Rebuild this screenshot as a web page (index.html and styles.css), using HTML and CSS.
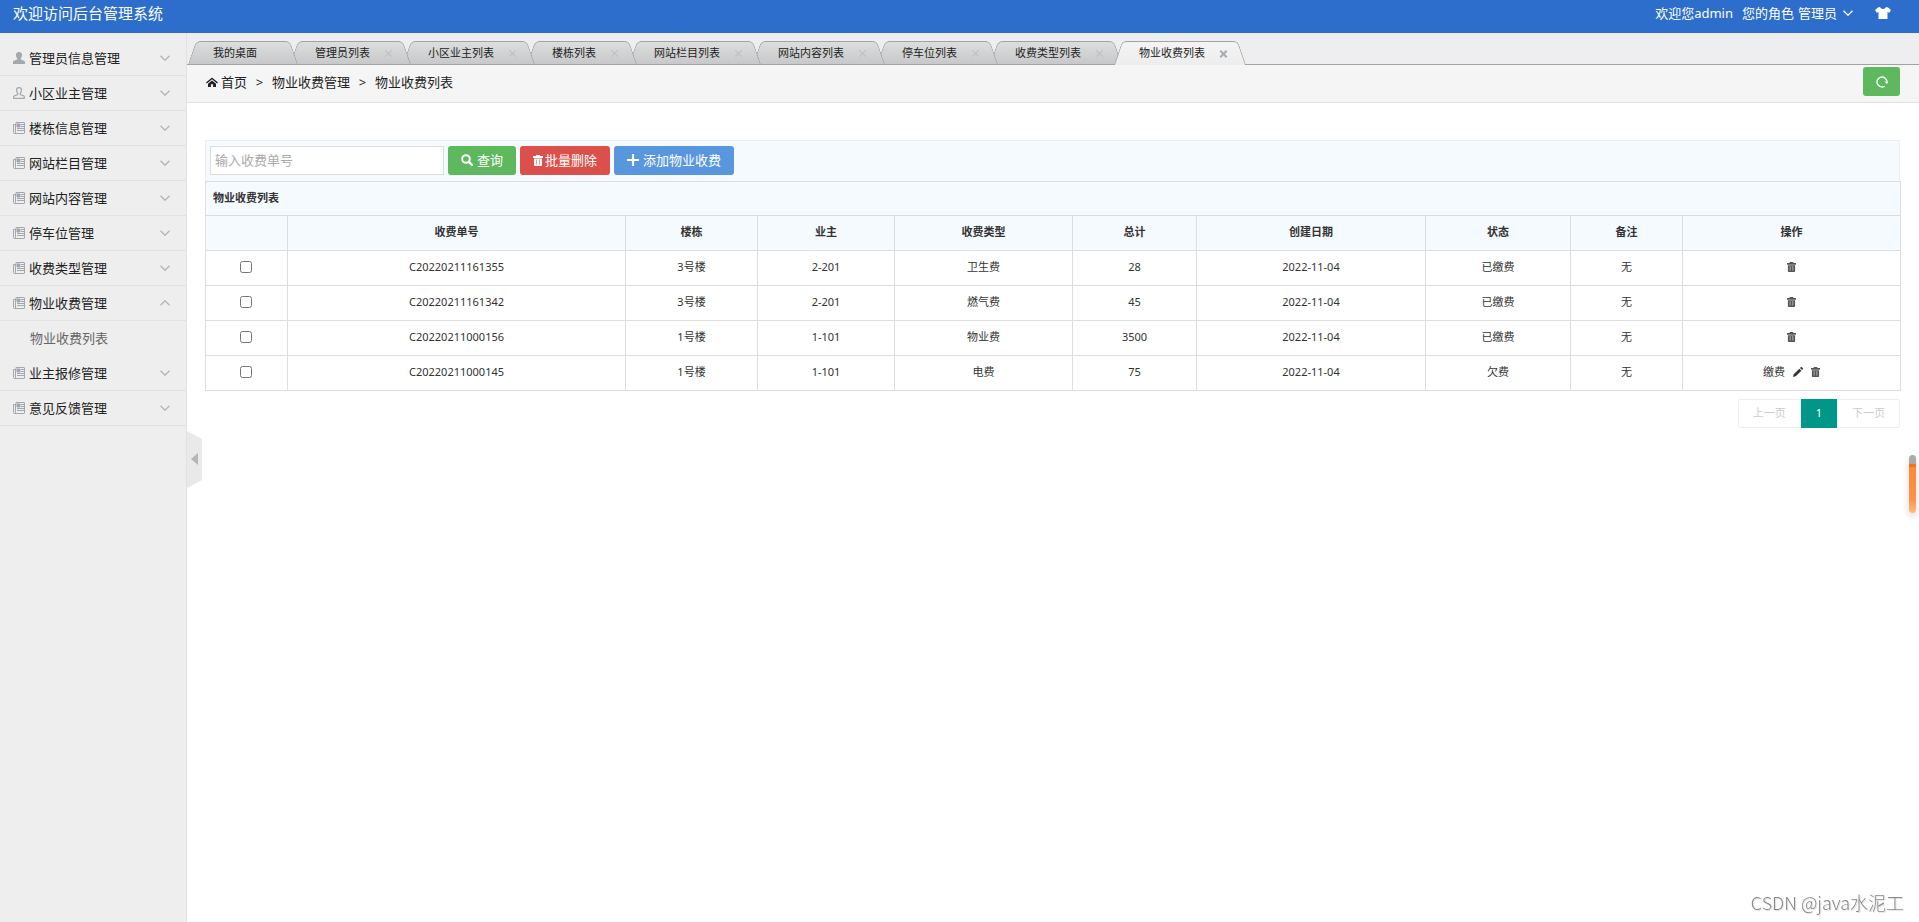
FILE: index.html
```html
<!DOCTYPE html>
<html lang="zh-CN">
<head>
<meta charset="utf-8">
<title>后台管理系统</title>
<link rel="stylesheet" href="styles.css">
</head>
<body>
<svg class="sprite" aria-hidden="true">
  <symbol id="i-user" viewBox="0 0 12 12"><path d="M6 0a3 3 0 0 1 3 3c0 1.400-.5 2.600-1.200 3.300v1.200L11 8.700c.7.300 1 .8 1 1.500V12H0v-1.800c0-.7.300-1.200 1-1.500l3.200-1.200V6.300C3.500 5.600 3 4.400 3 3a3 3 0 0 1 3-3z" fill="currentColor"/></symbol>
  <symbol id="i-user-line" viewBox="0 0 12 12"><path d="M6 .7c1.500 0 2.500 1 2.500 2.400 0 1.200-.5 2.300-1.200 2.900v1.500l3.200 1.200c.5.200.8.600.8 1.200v1.400H.7V9.900c0-.6.300-1 .8-1.200l3.200-1.200V6C4 5.400 3.500 4.300 3.500 3.100 3.500 1.700 4.500.7 6 .7z" fill="none" stroke="currentColor" stroke-width="1.200"/></symbol>
  <symbol id="i-news" viewBox="0 0 12 12"><path d="M3 .5h8c.3 0 .5.200.5.500v10c0 .3-.2.500-.5.500H1.500c-.6 0-1-.4-1-1V2.500H3zM2.500 2.500V10c0 1-.3 1.500-1 1.500" fill="none" stroke="currentColor"/><path d="M4 2h3v3H4zM8 2.500h3M8 4.500h3M4 6.500h7M4 8.500h7" fill="currentColor" stroke="currentColor"/></symbol>
  <symbol id="i-down" viewBox="0 0 10 6"><path d="M.5.700 5 5.200 9.500.700" fill="none" stroke="currentColor" stroke-width="1.300"/></symbol>
  <symbol id="i-shirt" viewBox="0 0 16 12"><path d="M5 0c.5 1.300 1.600 2 3 2s2.500-.7 3-2l2 .4L16 3l-1.700 2.700-1.800-.8V12h-9V4.900l-1.800.8L0 3 3 .4z" fill="currentColor"/></symbol>
  <symbol id="i-home" viewBox="0 0 12 10"><path d="M0 5.600 6 .5l6 5.100-.9.900L6 2.200.9 6.500z" fill="currentColor"/><path d="M2 6.700 6 3.400l4 3.300V10H7.100V7.200H4.900V10H2z" fill="currentColor"/></symbol>
  <symbol id="i-refresh" viewBox="0 0 12 12"><path d="M8.700 10.200A5 5 0 1 1 11 6" fill="none" stroke="currentColor" stroke-width="1.300"/><path d="M8.300 5.500H12V7L10.800 8z" fill="currentColor"/></symbol>
  <symbol id="i-search" viewBox="0 0 12 12"><circle cx="5" cy="5" r="3.800" fill="none" stroke="currentColor" stroke-width="2"/><path d="m8 8 3 3" stroke="currentColor" stroke-width="2.400" stroke-linecap="round"/></symbol>
  <symbol id="i-trash" viewBox="0 0 10 11"><path d="M3 0h4v1h3v2H0V1h3zM1 3.500h8V10c0 .6-.4 1-1 1H2c-.6 0-1-.4-1-1z" fill="currentColor"/></symbol>
  <symbol id="i-slots" viewBox="0 0 10 11"><path d="M3.500 4.500v5M6.500 4.500v5" stroke="currentColor"/></symbol>
  <symbol id="i-plus" viewBox="0 0 11 11"><path d="M5.500 0v11M0 5.500h11" stroke="currentColor" stroke-width="2"/></symbol>
  <symbol id="i-edit" viewBox="0 0 11 11"><path d="m0 11 .8-3L7 1.800 9.200 4 3 10.200zM7.700 1.100 8.500.300c.4-.4.900-.4 1.300 0l.9.900c.4.400.4.900 0 1.300l-.8.800z" fill="currentColor"/></symbol>
</svg>

<header class="topbar">
  <h1 class="brand">欢迎访问后台管理系统</h1>
  <div class="account">
    <span>欢迎您admin</span>
    <span class="role">您的角色</span>
    <button class="bare role-menu" type="button">管理员 <svg class="arrow"><use href="#i-down"/></svg></button>
    <button class="bare" type="button" aria-label="换肤"><svg class="shirt"><use href="#i-shirt"/></svg></button>
  </div>
</header>

<div class="shell">
  <nav class="sidebar" aria-label="主菜单">
    <button class="menu" type="button"><svg class="ico"><use href="#i-user"/></svg>管理员信息管理<svg class="arrow"><use href="#i-down"/></svg></button>
    <button class="menu" type="button"><svg class="ico"><use href="#i-user-line"/></svg>小区业主管理<svg class="arrow"><use href="#i-down"/></svg></button>
    <button class="menu" type="button"><svg class="ico"><use href="#i-news"/></svg>楼栋信息管理<svg class="arrow"><use href="#i-down"/></svg></button>
    <button class="menu" type="button"><svg class="ico"><use href="#i-news"/></svg>网站栏目管理<svg class="arrow"><use href="#i-down"/></svg></button>
    <button class="menu" type="button"><svg class="ico"><use href="#i-news"/></svg>网站内容管理<svg class="arrow"><use href="#i-down"/></svg></button>
    <button class="menu" type="button"><svg class="ico"><use href="#i-news"/></svg>停车位管理<svg class="arrow"><use href="#i-down"/></svg></button>
    <button class="menu" type="button"><svg class="ico"><use href="#i-news"/></svg>收费类型管理<svg class="arrow"><use href="#i-down"/></svg></button>
    <button class="menu open" type="button" aria-expanded="true"><svg class="ico"><use href="#i-news"/></svg>物业收费管理<svg class="arrow"><use href="#i-down"/></svg></button>
    <a class="submenu" href="#list">物业收费列表</a>
    <button class="menu" type="button"><svg class="ico"><use href="#i-news"/></svg>业主报修管理<svg class="arrow"><use href="#i-down"/></svg></button>
    <button class="menu" type="button"><svg class="ico"><use href="#i-news"/></svg>意见反馈管理<svg class="arrow"><use href="#i-down"/></svg></button>
  </nav>

  <main class="content">
    <button class="collapse" type="button" aria-label="收起菜单"></button>
    <div class="tabs">
      <div class="tab home"><a href="#t0">我的桌面</a></div>
      <div class="tab"><a href="#t1">管理员列表</a><button class="close" type="button" aria-label="关闭"></button></div>
      <div class="tab"><a href="#t2">小区业主列表</a><button class="close" type="button" aria-label="关闭"></button></div>
      <div class="tab"><a href="#t3">楼栋列表</a><button class="close" type="button" aria-label="关闭"></button></div>
      <div class="tab"><a href="#t4">网站栏目列表</a><button class="close" type="button" aria-label="关闭"></button></div>
      <div class="tab"><a href="#t5">网站内容列表</a><button class="close" type="button" aria-label="关闭"></button></div>
      <div class="tab"><a href="#t6">停车位列表</a><button class="close" type="button" aria-label="关闭"></button></div>
      <div class="tab"><a href="#t7">收费类型列表</a><button class="close" type="button" aria-label="关闭"></button></div>
      <div class="tab active"><a href="#t8">物业收费列表</a><button class="close" type="button" aria-label="关闭"></button></div>
    </div>

    <div class="crumbs">
      <svg class="home-ico"><use href="#i-home"/></svg>
      <a href="#home">首页</a><span class="sep">&gt;</span><span>物业收费管理</span><span class="sep">&gt;</span><span>物业收费列表</span>
      <button class="btn green reload" type="button" aria-label="刷新"><svg class="ico"><use href="#i-refresh"/></svg></button>
    </div>

    <section class="page" id="list">
      <form class="filter">
        <input class="query" type="text" placeholder="输入收费单号" aria-label="输入收费单号">
        <button class="btn green" type="button"><svg class="ico"><use href="#i-search"/></svg>查询</button>
        <button class="btn red" type="button"><svg class="bin"><use href="#i-trash"/><use class="slots" href="#i-slots"/></svg>批量删除</button>
        <button class="btn blue" type="button"><svg class="ico"><use href="#i-plus"/></svg>添加物业收费</button>
      </form>

      <table class="grid">
        <colgroup><col class="c-check"><col class="c-no"><col class="c-building"><col class="c-owner"><col class="c-type"><col class="c-total"><col class="c-date"><col class="c-state"><col class="c-note"><col class="c-ops"></colgroup>
        <thead>
          <tr><th class="title" colspan="10">物业收费列表</th></tr>
          <tr><th></th><th>收费单号</th><th>楼栋</th><th>业主</th><th>收费类型</th><th>总计</th><th>创建日期</th><th>状态</th><th>备注</th><th>操作</th></tr>
        </thead>
        <tbody>
          <tr><td><input type="checkbox" aria-label="C20220211161355"></td><td>C20220211161355</td><td>3号楼</td><td>2-201</td><td>卫生费</td><td>28</td><td>2022-11-04</td><td>已缴费</td><td>无</td><td><div class="ops"><a href="#del" aria-label="删除"><svg class="bin"><use href="#i-trash"/><use class="slots" href="#i-slots"/></svg></a></div></td></tr>
          <tr><td><input type="checkbox" aria-label="C20220211161342"></td><td>C20220211161342</td><td>3号楼</td><td>2-201</td><td>燃气费</td><td>45</td><td>2022-11-04</td><td>已缴费</td><td>无</td><td><div class="ops"><a href="#del" aria-label="删除"><svg class="bin"><use href="#i-trash"/><use class="slots" href="#i-slots"/></svg></a></div></td></tr>
          <tr><td><input type="checkbox" aria-label="C20220211000156"></td><td>C20220211000156</td><td>1号楼</td><td>1-101</td><td>物业费</td><td>3500</td><td>2022-11-04</td><td>已缴费</td><td>无</td><td><div class="ops"><a href="#del" aria-label="删除"><svg class="bin"><use href="#i-trash"/><use class="slots" href="#i-slots"/></svg></a></div></td></tr>
          <tr><td><input type="checkbox" aria-label="C20220211000145"></td><td>C20220211000145</td><td>1号楼</td><td>1-101</td><td>电费</td><td>75</td><td>2022-11-04</td><td>欠费</td><td>无</td><td><div class="ops"><a href="#pay">缴费</a><a href="#edit" aria-label="编辑"><svg class="pen"><use href="#i-edit"/></svg></a><a href="#del" aria-label="删除"><svg class="bin"><use href="#i-trash"/><use class="slots" href="#i-slots"/></svg></a></div></td></tr>
        </tbody>
      </table>

      <nav class="pager" aria-label="分页">
        <a href="#prev">上一页</a><a class="current" href="#1">1</a><a href="#next">下一页</a>
      </nav>
    </section>
  </main>
</div>
<div class="meter"></div>
<div class="credit">CSDN @java水泥工</div>
</body>
</html>
```
FILE: styles.css
```css
* { box-sizing: border-box; }
body {
  margin: 0;
  min-height: 100vh;
  display: flex;
  flex-direction: column;
  font: 13px/20px "Noto Sans", "Noto Sans CJK SC", sans-serif;
  color: #222;
  background: #fff;
}
a { color: inherit; text-decoration: none; }
button, input { font: inherit; color: inherit; margin: 0; }
button { border: 0; padding: 0; background: none; cursor: pointer; }
svg { flex: none; display: block; }
.sprite { position: absolute; width: 0; height: 0; }
.ico { width: 12px; height: 12px; }
.arrow { width: 10px; height: 6px; }
.bin { width: 9px; height: 10px; }
.pen { width: 10px; height: 10px; }
.slots { color: #bbb; }

.topbar {
  height: 33px;
  padding: 0 28px 8px 13px;
  display: flex;
  align-items: center;
  justify-content: space-between;
  background: #2d6dcc;
  color: #fff;
}
.brand { margin: 0; font-size: 15px; line-height: 20px; font-weight: 400; }
.account { display: flex; align-items: center; }
.role { margin: 0 4px 0 9px; }
.role-menu { display: flex; align-items: center; gap: 6px; margin-right: 22px; }
.shirt { width: 16px; height: 12px; }

.shell { flex: 1; display: flex; }
.sidebar {
  width: 187px;
  flex: none;
  padding-top: 8px;
  border-right: 1px solid #e2e2e2;
  background: #eee;
}
.menu {
  width: 100%;
  height: 35px;
  padding: 0 16px 0 13px;
  display: flex;
  align-items: center;
  border-bottom: 1px solid #e2e2e2;
}
.menu .ico { margin-right: 4px; color: #a2a7b0; }
.menu .arrow { margin-left: auto; color: #b3b3b3; }
.menu.open .arrow { transform: rotate(180deg); }
.submenu { display: block; padding: 7px 0 8px 30px; color: #666; }

.content { flex: 1; min-width: 0; position: relative; }
.collapse {
  position: fixed;
  left: 187px;
  top: 50%;
  width: 15px;
  height: 57px;
  margin-top: -30px;
  background: #e9e9e9;
  clip-path: polygon(0 0, 100% 8px, 100% 49px, 0 100%);
}
.collapse::before {
  content: "";
  position: absolute;
  left: 4px;
  top: 22px;
  border: solid transparent;
  border-width: 6px 7px 6px 0;
  border-right-color: #b5b5b5;
}

.tabs {
  height: 32px;
  padding: 8px 0 0 5px;
  display: flex;
  background: #eeeef0;
  border-bottom: 1px solid #a3a3a3;
}
.tab {
  position: relative;
  isolation: isolate;
  height: 23px;
  padding: 0 15px 0 21px;
  display: flex;
  align-items: center;
  gap: 14px;
  font-size: 11px;
}
.tab.home { padding: 0 37px 0 21px; }
.tab::before, .tab::after {
  content: "";
  position: absolute;
  z-index: -1;
  top: 0;
  bottom: 0;
  border: 1px solid #a3a3a3;
  border-bottom: 0;
  background: linear-gradient(#dcdedd, #c8c8ca);
}
.tab::before { left: 0; right: 50%; border-right: 0; border-top-left-radius: 5px; transform: skewX(-19deg); }
.tab::after { right: 0; left: 20px; border-left: 0; border-top-right-radius: 5px; transform: skewX(19deg); }
.tab:nth-child(1) { z-index: 9; }
.tab:nth-child(2) { z-index: 8; }
.tab:nth-child(3) { z-index: 7; }
.tab:nth-child(4) { z-index: 6; }
.tab:nth-child(5) { z-index: 5; }
.tab:nth-child(6) { z-index: 4; }
.tab:nth-child(7) { z-index: 3; }
.tab:nth-child(8) { z-index: 2; }
.tab.active { z-index: 10; height: 24px; }
.tab.active::before, .tab.active::after { background: linear-gradient(#f4f4f4, #ededee); }
.close { position: relative; width: 8px; height: 8px; color: #b9c0c4; }
.active .close { color: #a4adb2; }
.close::before, .close::after {
  content: "";
  position: absolute;
  left: 0;
  top: 4px;
  width: 9px;
  height: 1px;
  background: currentColor;
  transform: rotate(45deg);
}
.close::after { transform: rotate(-45deg); }
.active .close::before, .active .close::after { height: 2px; }

.crumbs {
  height: 38px;
  padding: 0 19px 4px;
  display: flex;
  align-items: center;
  background: #f5f5f5;
  border-bottom: 1px solid #e2e2e2;
}
.home-ico { width: 12px; height: 10px; margin-right: 3px; }
.sep { width: 25px; text-align: center; }
.reload { width: 37px; margin-left: auto; }

.btn {
  height: 29px;
  padding: 0 13px;
  display: flex;
  align-items: center;
  justify-content: center;
  gap: 4px;
  border-radius: 3px;
  color: #fff;
}
.green { background: #5eb85e; }
.red { background: #dc504c; gap: 2px; }
.red .bin { width: 10px; height: 11px; }
.red .slots { color: #e99; }
.blue { background: #5897de; }

.page { padding: 37px 19px 20px 18px; }
.filter {
  height: 41px;
  padding: 0 4px 2px;
  display: flex;
  align-items: center;
  gap: 4px;
  border: 1px solid #eee;
  border-bottom: 0;
  background: #f5fafe;
}
.query {
  width: 234px;
  height: 29px;
  padding: 0 4px;
  border: 1px solid #ddd;
  background: #fff;
}
.query::placeholder { color: #aaa; }

.grid {
  width: 100%;
  table-layout: fixed;
  border-collapse: collapse;
  font-size: 11px;
  line-height: 18px;
  color: #333;
}
.c-check { width: 82px; }
.c-no { width: 338px; }
.c-building { width: 132px; }
.c-owner { width: 137px; }
.c-type { width: 178px; }
.c-total { width: 124px; }
.c-date { width: 229px; }
.c-state { width: 145px; }
.c-note { width: 112px; }
.c-ops { width: 218px; }
.grid th, .grid td { height: 35px; padding: 0 8px 2px; border: 1px solid #ddd; text-align: center; }
.grid th { background: #f5fafe; }
.grid .title { height: 34px; padding: 0 7px 1px; text-align: left; }
.grid input { display: block; width: 12px; height: 12px; margin: 0 auto 1px; }
.grid td:first-child { padding-right: 10px; }
.ops { display: flex; align-items: center; justify-content: center; gap: 8px; }
.ops .bin { color: #555; }

.pager { display: flex; justify-content: flex-end; margin-top: 8px; font-size: 11px; }
.pager a {
  height: 29px;
  padding: 0 14px;
  line-height: 26px;
  border: 1px solid #eee;
  color: #ccc;
}
.pager a:first-child { border-radius: 2px 0 0 2px; }
.pager a:last-child { border-radius: 0 2px 2px 0; }
.pager .current { border-color: #009688; background: #009688; color: #fff; }

.meter {
  position: fixed;
  right: 3px;
  top: 455px;
  width: 7px;
  height: 58px;
  border-radius: 4px;
  background: linear-gradient(#aaa 0 9px, #ee7420 9px 12px, #ff8833 12px, #ff924a 45px, #ffbe83);
  box-shadow: 0 4px 7px rgba(0, 0, 0, .15);
}
.credit {
  position: fixed;
  right: 15px;
  bottom: 7px;
  font-family: "Noto Sans CJK SC", sans-serif;
  font-weight: 300;
  font-size: 18px;
  line-height: 26px;
  color: #888;
  text-shadow: 1px 1px 1px #ddd;
}
```
